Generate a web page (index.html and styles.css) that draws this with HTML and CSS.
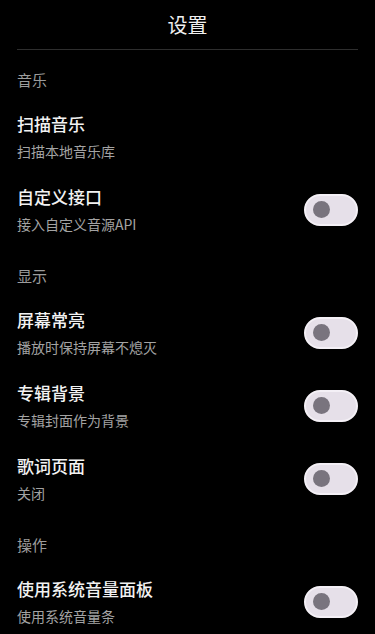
FILE: index.html
```html
<!DOCTYPE html>
<html lang="zh-CN">
<head>
  <meta charset="UTF-8">
  <meta name="viewport" content="width=device-width, initial-scale=1.0">
  <title>设置</title>
  <link rel="stylesheet" href="styles.css">
</head>
<body>
  <header class="top-bar">
    <h1>设置</h1>
  </header>

  <div class="settings">
    <div class="section-title">音乐</div>
    <div class="setting-item">
      <div class="setting-text">
        <div class="setting-name">扫描音乐</div>
        <div class="setting-desc">扫描本地音乐库</div>
      </div>
    </div>
    <div class="setting-item">
      <div class="setting-text">
        <div class="setting-name">自定义接口</div>
        <div class="setting-desc">接入自定义音源API</div>
      </div>
      <div class="switch"><span class="knob"></span></div>
    </div>

    <div class="section-title">显示</div>
    <div class="setting-item">
      <div class="setting-text">
        <div class="setting-name">屏幕常亮</div>
        <div class="setting-desc">播放时保持屏幕不熄灭</div>
      </div>
      <div class="switch"><span class="knob"></span></div>
    </div>
    <div class="setting-item">
      <div class="setting-text">
        <div class="setting-name">专辑背景</div>
        <div class="setting-desc">专辑封面作为背景</div>
      </div>
      <div class="switch"><span class="knob"></span></div>
    </div>
    <div class="setting-item">
      <div class="setting-text">
        <div class="setting-name">歌词页面</div>
        <div class="setting-desc">关闭</div>
      </div>
      <div class="switch"><span class="knob"></span></div>
    </div>

    <div class="section-title">操作</div>
    <div class="setting-item">
      <div class="setting-text">
        <div class="setting-name">使用系统音量面板</div>
        <div class="setting-desc">使用系统音量条</div>
      </div>
      <div class="switch"><span class="knob"></span></div>
    </div>
  </div>
</body>
</html>
```

FILE: styles.css
```css
body {
  margin: 0;
  background-color: #000;
  color: #ececec;
  font-family: "Noto Sans CJK SC", "Noto Sans", sans-serif;
  overflow: hidden;
}
.top-bar {
  height: 49px;
  margin: 0 17px;
  border-bottom: 1px solid #2e2e2e;
  display: flex;
  align-items: center;
  justify-content: center;
}
.top-bar h1 {
  margin: 0;
  font-size: 20px;
  font-weight: normal;
  line-height: 28px;
  color: #f0f0f0;
}
.section-title {
  padding: 20px 17px 10px;
  font-size: 15px;
  line-height: 20px;
  color: #9c9c9c;
}
.setting-item {
  display: flex;
  align-items: center;
  justify-content: space-between;
  padding: 12px 17px;
}
.setting-name {
  font-size: 17px;
  line-height: 24px;
  font-weight: 500;
  color: #f2f2f2;
}
.setting-desc {
  margin-top: 5px;
  font-size: 14px;
  line-height: 20px;
  color: #a3a3a3;
}
.switch {
  width: 43px;
  height: 28px;
  padding-left: 7px;
  border: 2px solid #f4f0f6;
  border-radius: 16px;
  background-color: #e6e0e9;
  display: flex;
  align-items: center;
}
.knob {
  width: 17px;
  height: 17px;
  border-radius: 50%;
  background-color: #79747e;
}
```
